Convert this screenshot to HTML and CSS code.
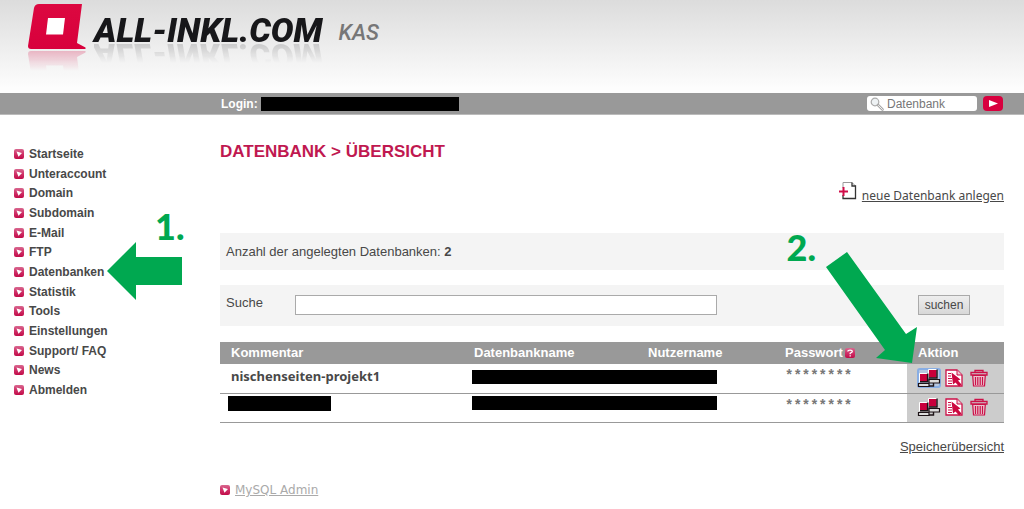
FILE: index.html
```
<!DOCTYPE html>
<html lang="de">
<head>
<meta charset="utf-8">
<title>ALL-INKL.COM KAS</title>
<link rel="stylesheet" href="styles.css">
</head>
<body>
<svg width="0" height="0" class="defs" aria-hidden="true">
  <defs>
    <linearGradient id="pink" x1="0" y1="0" x2="0" y2="1">
      <stop offset="0" stop-color="#d8688f"/><stop offset="0.5" stop-color="#d03068"/><stop offset="1" stop-color="#c00c48"/>
    </linearGradient>
    <linearGradient id="red" x1="0" y1="0" x2="0" y2="1">
      <stop offset="0" stop-color="#dc0840"/><stop offset="1" stop-color="#d8003c"/>
    </linearGradient>
  </defs>
  <symbol id="bullet" viewBox="0 0 10 10">
    <rect width="10" height="10" rx="2" fill="url(#pink)"/>
    <path d="M2.500 2.500L8 4L4.500 7.800Z" fill="#fff"/>
  </symbol>
  <symbol id="net" viewBox="0 0 24 20">
    <path d="M11.500 10V1.500H20" fill="none" stroke="#fff"/>
    <path d="M12 2H19.500V9.500H12Z" fill="#c8003c"/>
    <path d="M20 1.500V10H12" fill="none" stroke="#1c1216" stroke-width="1.400"/>
    <path d="M12 11.500H22.500V15H12Z" fill="#ddd" stroke="#1c1216" stroke-width="1.200"/>
    <path d="M2.500 14V5.500H11" fill="none" stroke="#fff"/>
    <path d="M3 6H10V13H3Z" fill="#c8003c"/>
    <path d="M10.700 5.500V13.700H3" fill="none" stroke="#1c1216" stroke-width="1.600"/>
    <path d="M1.500 15.500H12V18.500H1.500Z" fill="#ddd" stroke="#1c1216" stroke-width="1.200"/>
    <path d="M12 18H16.500V15" fill="none" stroke="#1c1216" stroke-width="1.400"/>
  </symbol>
  <symbol id="doc" viewBox="0 0 18 18">
    <path d="M1 1H12L17 6V17H1Z" fill="#fff" stroke="#cc1048" stroke-width="1.3"/>
    <path d="M12 1V6H17" fill="#f0c8d4" stroke="#cc1048"/>
    <path d="M3 4.500H6M3 7H6M3 9.500H7M3 12H7M3 14.500H7" stroke="#cc1048" stroke-width="1.2"/>
    <path d="M6.500 3.500L15.500 10.500L13 11.500L16.500 15.500L14 17.500L10.500 13.500L8 15.500Z" fill="#cc0840"/>
  </symbol>
  <symbol id="trash" viewBox="0 0 18 18">
    <path d="M5 3V1.500H13V3M1 3.500H17V6H1Z" fill="none" stroke="#cc1048" stroke-width="1.3"/>
    <path d="M2.700 6.500H15.300L14.500 17H3.500Z" fill="#e8c4ce" stroke="#cc1048" stroke-width="1.2"/>
    <path d="M5.500 8V16M7.800 8V16M10.200 8V16M12.500 8V16" stroke="#cc1048" stroke-width="1.2"/>
  </symbol>
</svg>

<header class="header">
  <a class="brand" href="#">
    <svg class="mark" viewBox="0 0 60 46" aria-hidden="true">
      <path d="M11 0H54L49 39L57.500 43.500V45H3Q0 45 0 42L6 4Q7 0 11 0Z" fill="url(#red)"/>
      <path d="M20 14H37L35 30.500H18Z" fill="#fff"/>
    </svg>
    <span class="brand-name">ALL-INKL.COM</span>
    <span class="brand-sub">KAS</span>
  </a>
</header>

<div class="bar">
  <div class="login">Login: <span class="redacted login-value"></span></div>
  <form class="quick">
    <label class="quick-field">
      <svg class="lens" viewBox="0 0 14 14" aria-hidden="true">
        <circle cx="5" cy="5" r="3.800" fill="#eef2f4" stroke="#aaa" stroke-width="1.200"/>
        <path d="M8 8L12.500 12.500" stroke="#aaa" stroke-width="2.600" stroke-linecap="round"/>
        <path d="M8.500 8.500L12.500 12.500" stroke="#eee" stroke-linecap="round"/>
      </svg>
      <input type="text" value="Datenbank" aria-label="Schnellsuche">
    </label>
    <button type="button" class="go" aria-label="Los">
      <svg viewBox="0 0 20 15" aria-hidden="true"><path d="M6 4L15 7.500L6 11Z" fill="#fff"/></svg>
    </button>
  </form>
</div>

<div class="page">
  <nav class="nav">
    <ul>
      <li><a href="#"><svg class="bullet"><use href="#bullet"/></svg>Startseite</a></li>
      <li><a href="#"><svg class="bullet"><use href="#bullet"/></svg>Unteraccount</a></li>
      <li><a href="#"><svg class="bullet"><use href="#bullet"/></svg>Domain</a></li>
      <li><a href="#"><svg class="bullet"><use href="#bullet"/></svg>Subdomain</a></li>
      <li><a href="#"><svg class="bullet"><use href="#bullet"/></svg>E-Mail</a></li>
      <li><a href="#"><svg class="bullet"><use href="#bullet"/></svg>FTP</a></li>
      <li><a href="#"><svg class="bullet"><use href="#bullet"/></svg>Datenbanken</a></li>
      <li><a href="#"><svg class="bullet"><use href="#bullet"/></svg>Statistik</a></li>
      <li><a href="#"><svg class="bullet"><use href="#bullet"/></svg>Tools</a></li>
      <li><a href="#"><svg class="bullet"><use href="#bullet"/></svg>Einstellungen</a></li>
      <li><a href="#"><svg class="bullet"><use href="#bullet"/></svg>Support/ FAQ</a></li>
      <li><a href="#"><svg class="bullet"><use href="#bullet"/></svg>News</a></li>
      <li><a href="#"><svg class="bullet"><use href="#bullet"/></svg>Abmelden</a></li>
    </ul>
    <span class="step step-one">1.</span>
    <svg class="arrow arrow-one" viewBox="0 0 75 58" aria-hidden="true"><path d="M0 29L29 0V15H75V43H29V58Z"/></svg>
  </nav>

  <main class="main">
    <h1>DATENBANK &gt; ÜBERSICHT</h1>

    <div class="create">
      <svg class="new-icon" viewBox="0 0 18 20" aria-hidden="true">
        <path d="M4 7V1.500H13L16.500 5" fill="none" stroke="#999"/>
        <path d="M13 1.500V5H16.500V17.500H4V14" fill="none" stroke="#333" stroke-width="1.300"/>
        <path d="M0 10.500H9M4.500 6V15" stroke="#d00c48" stroke-width="2"/>
      </svg>
      <a href="#">neue Datenbank anlegen</a>
    </div>

    <p class="panel count">Anzahl der angelegten Datenbanken: <b>2</b></p>

    <form class="panel search">
      <label for="suche">Suche</label>
      <input id="suche" type="text">
      <button type="button">suchen</button>
    </form>

    <table class="list">
      <colgroup><col><col class="c-db"><col class="c-user"><col class="c-pass"><col class="c-act"></colgroup>
      <thead>
        <tr>
          <th>Kommentar</th><th>Datenbankname</th><th>Nutzername</th>
          <th><span class="with-help">Passwort
            <svg class="bullet" viewBox="0 0 10 10"><rect width="10" height="10" rx="2" fill="url(#pink)"/><path d="M2.800 3.500Q2.800 2.200 5 2.200Q7.300 2.200 7.300 3.600Q7.300 4.700 5.200 5.200V6.200M5.200 7.200V8.400" fill="none" stroke="#fff" stroke-width="1.300"/></svg></span></th>
          <th>Aktion</th>
        </tr>
      </thead>
      <tbody>
        <tr>
          <td class="name">nischenseiten-projekt1</td>
          <td colspan="2" class="hidden-cell"><span class="redacted wide"></span></td>
          <td class="stars">********</td>
          <td class="act"><div class="actions">
            <a href="#" class="net focus" aria-label="Zugriff"><svg><use href="#net"/></svg></a>
            <a href="#" class="doc" aria-label="Bearbeiten"><svg><use href="#doc"/></svg></a>
            <a href="#" class="trash" aria-label="Löschen"><svg><use href="#trash"/></svg></a>
          </div></td>
        </tr>
        <tr>
          <td class="hidden-cell first"><span class="redacted short"></span></td>
          <td colspan="2" class="hidden-cell"><span class="redacted wide"></span></td>
          <td class="stars">********</td>
          <td class="act"><div class="actions">
            <a href="#" class="net" aria-label="Zugriff"><svg><use href="#net"/></svg></a>
            <a href="#" class="doc" aria-label="Bearbeiten"><svg><use href="#doc"/></svg></a>
            <a href="#" class="trash" aria-label="Löschen"><svg><use href="#trash"/></svg></a>
          </div></td>
        </tr>
      </tbody>
    </table>

    <div class="storage"><a href="#">Speicherübersicht</a></div>
    <div class="mysql"><svg class="bullet"><use href="#bullet"/></svg><a href="#">MySQL Admin</a></div>

    <span class="step step-two">2.</span>
    <svg class="arrow arrow-two" viewBox="0 0 92 112" aria-hidden="true"><path d="M0 15L21 0L80 82L91 75L86 111L50 106L59 98Z"/></svg>
  </main>
</div>
</body>
</html>
```

FILE: styles.css
```
* { box-sizing: border-box; }

body {
  margin: 0;
  background: #fff;
  color: #484848;
  font: 13px/16px "Liberation Sans", Arial, sans-serif;
}

a { color: inherit; }
.defs { position: absolute; }
.redacted { display: block; background: #000; height: 14px; }
.bullet { width: 10px; height: 10px; flex: none; }

.header {
  height: 93px;
  padding: 4px 28px 0;
  background: linear-gradient(#dcdcdc, #fdfdfd 95%);
}
.brand {
  display: flex;
  align-items: flex-start;
  width: max-content;
  text-decoration: none;
}
.mark {
  width: 60px;
  height: 46px;
  -webkit-box-reflect: below 0 linear-gradient(transparent 55%, rgba(0, 0, 0, 0.25));
}
.brand-name {
  margin: 9px 0 0 6px;
  color: #17171a;
  font: italic 900 34px/34px Roboto, sans-serif;
  -webkit-box-reflect: below -8px linear-gradient(transparent 30%, rgba(0, 0, 0, 0.2));
}
.brand-sub {
  margin: 16px 0 0 16px;
  color: #777;
  font: italic 500 22px/26px Roboto, sans-serif;
}

.bar {
  display: flex;
  align-items: center;
  justify-content: space-between;
  min-height: 22px;
  padding: 0 21px 0 221px;
  background: #999;
  border-bottom: 1px solid #bbb;
}
.login {
  display: flex;
  align-items: center;
  gap: 3px;
  color: #fff;
  font-size: 12px;
  font-weight: bold;
}
.login-value { width: 198px; }
.quick { display: flex; gap: 6px; }
.quick-field {
  display: flex;
  align-items: center;
  width: 110px;
  height: 15px;
  padding-left: 3px;
  gap: 3px;
  background: #fff;
  border-radius: 3px;
}
.lens { width: 14px; height: 14px; flex: none; }
.quick-field input {
  width: 100%;
  min-width: 0;
  padding: 0;
  border: 0;
  background: none;
  color: #777;
  font: 12px/14px "Liberation Sans", Arial, sans-serif;
}
.go {
  width: 20px;
  height: 15px;
  padding: 0;
  border: 0;
  border-radius: 4px;
  background: #d8003e;
}
.go svg { display: block; width: 20px; height: 15px; }

.page { display: flex; }

.nav {
  position: relative;
  flex: none;
  width: 220px;
  padding: 30px 0 0 14px;
}
.nav ul {
  display: grid;
  align-content: space-between;
  min-height: 254px;
  margin: 0;
  padding: 0;
  list-style: none;
}
.nav a {
  display: flex;
  align-items: center;
  gap: 5px;
  color: #484848;
  font-size: 12px;
  font-weight: bold;
  line-height: 18px;
  text-decoration: none;
}

.main {
  position: relative;
  flex: 1;
  min-width: 0;
  padding: 27px 20px 0 0;
}
h1 {
  margin: 0;
  color: #c01850;
  font-size: 17px;
  line-height: 20px;
}
.create {
  display: flex;
  justify-content: flex-end;
  align-items: flex-end;
  gap: 5px;
  margin-top: 19px;
}
.create a { font: 12px/16px "Noto Sans", sans-serif; }
.new-icon { width: 18px; height: 20px; margin-bottom: 3px; }

.panel { background: #f4f4f4; padding: 0 6px; }
.count { margin: 29px 0 0; line-height: 37px; }
.search {
  display: flex;
  align-items: center;
  margin-top: 15px;
  padding: 10px 34px 11px 6px;
}
.search label { width: 69px; margin-bottom: 4px; }
.search input {
  flex: 0 1 422px;
  min-width: 0;
  height: 20px;
  border: 1px solid #aaa;
  background: #fff;
}
.search button {
  width: 52px;
  height: 20px;
  margin-left: auto;
  padding: 0;
  border: 1px solid #aaa;
  background: linear-gradient(#eee, #d8d8d8);
  color: #484848;
  font: 12px/16px "Liberation Sans", Arial, sans-serif;
}

.list {
  width: 100%;
  margin-top: 16px;
  border-collapse: separate;
  border-spacing: 0;
  table-layout: fixed;
}
.c-db { width: 174px; }
.c-user { width: 137px; }
.c-pass { width: 133px; }
.c-act { width: 97px; }
.list th {
  padding: 0 0 0 11px;
  background: #999;
  color: #fff;
  line-height: 22px;
  text-align: left;
}
.with-help { display: flex; align-items: center; gap: 2px; }
.list td {
  height: 30px;
  padding: 0 0 0 11px;
  border-bottom: 1px solid #999;
  vertical-align: top;
}
.list tr:last-child td { height: 29px; }
.list .name { padding-top: 3px; font: bold 13px/18px "Noto Sans", sans-serif; }
.list .hidden-cell { padding: 6px 0 0 9px; }
.list tr:last-child .hidden-cell { padding-top: 2px; }
.list .hidden-cell.first { padding-left: 8px; }
.wide { width: 245px; }
.short { width: 103px; height: 15px; }
.list .stars { padding-top: 4px; font: bold 14px/16px "Liberation Mono", monospace; color: #777; }
.list .act { padding: 4px 0 0 10px; background: #ccc; }
.list tr:last-child .act { padding-top: 3px; }
.actions { display: flex; align-items: center; }
.actions a, .actions svg { display: block; }
.actions svg { width: 18px; height: 18px; }
.actions .net svg { width: 24px; height: 20px; }
.actions .net { border-radius: 3px; }
.focus { background: #b8c8e0; box-shadow: inset 0 0 0 2px #88aee4; }
.doc { margin-left: 4px; }
.trash { margin-left: 7px; }

.storage { margin-top: 16px; text-align: right; }
.mysql {
  display: flex;
  align-items: center;
  gap: 5px;
  margin-top: 27px;
  color: #aaa;
  font: 12px/16px "DejaVu Sans", sans-serif;
}

/* Tutorial markers over the page */
.step {
  position: absolute;
  color: #00a850;
  font: 900 36px/36px Lato, sans-serif;
}
.step-one { left: 155px; top: 93px; }
.step-two { right: 208px; top: 114px; }
.arrow { position: absolute; fill: #00a850; }
.arrow-one { left: 107px; top: 127px; width: 75px; height: 58px; }
.arrow-two { right: 106px; top: 137px; width: 92px; height: 112px; }
```
